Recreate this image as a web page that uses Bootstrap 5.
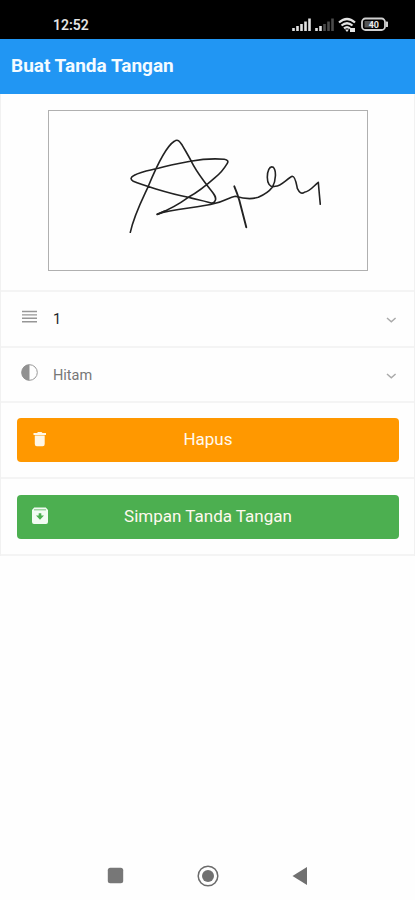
<!DOCTYPE html>
<html lang="id">
<head>
<meta charset="utf-8">
<meta name="viewport" content="width=device-width, initial-scale=1">
<title>Buat Tanda Tangan</title>
<link href="https://cdn.jsdelivr.net/npm/bootstrap@5.3.0/dist/css/bootstrap.min.css" rel="stylesheet">
<style>
body{font-family:Roboto,"Liberation Sans",sans-serif;height:900px;overflow:hidden;background:#fefefe}
svg{display:block;flex:none}
.statusbar{height:39px;background:#000;padding:11px 27px 0 53px}
.clock{font-size:14px;font-weight:600;line-height:28px;color:#e4e4e4}
.signals{margin-top:3px}
.appbar{height:55px;background:#2196f3;padding:0 11px}
.apptitle{font-size:19px;font-weight:700;line-height:54px;color:#f4fbff}
.panel{border:solid #f1f1f1;border-width:0 1px 0 1px}
.panel>*{border-bottom:2px solid #f4f4f4}
.padrow{height:198px;padding:16px 46px 0 47px}
.pad{height:161px;border:1.5px solid #b0b0b0}
.pickrow{padding:2px 17px 0 19px;color:#777}
.pick-a{height:56px}
.pick-b{height:55px}
.picktext{font-size:14.5px;line-height:20px;margin-left:15px}
.btnrow{height:76px;padding:15px 15px 0 16px}
.btnrow-last{height:77px;padding-top:16px}
.bigbtn{height:44px;border:0;border-radius:4px;font-size:17px;padding:0 15px 1px;color:#fff9ee}
.bigbtn .lead-icon{width:16px}
.bigbtn svg{margin-bottom:2px}
.bg-hapus{background:#ff9800}
.bg-simpan{background:#4caf50}
.navkeys{height:50px;padding:1px 107px 0 107px}
</style>
<script src="https://cdn.jsdelivr.net/npm/bootstrap@5.3.0/dist/js/bootstrap.bundle.min.js" defer></script>
</head>
<body class="d-flex flex-column m-0">
<header>
  <div class="statusbar d-flex justify-content-between">
    <span class="clock">12:52</span>
    <svg class="signals" width="97" height="20" viewBox="291 14 97 20">
      <g stroke="#e0e0e0" stroke-width="2.600">
        <path d="M293.500 31v-3M297.500 31v-5M301.500 31v-7M305.500 31v-9.500M309.500 31v-12.500"/>
        <path d="M316.500 31v-3M320.500 31v-5"/>
        <path stroke="#4a4a4a" d="M324.500 31v-7M328.500 31v-9.500M332.500 31v-12.500"/>
      </g>
      <g fill="none" stroke="#e4e4e4" stroke-width="2.200">
        <path d="M339 22.500q8-7 16 0M341.500 25.500q5.500-4.500 11 0M344 28.300q3-2.500 6 0"/>
      </g>
      <path fill="#e4e4e4" d="M345 29.500h4l-2 2.500zM350 28h5v4h-5z"/>
      <rect x="362" y="18.500" width="23" height="11.500" rx="3.500" fill="none" stroke="#d0d0d0" stroke-width="1.800"/>
      <path fill="#d0d0d0" d="M386 21.500h1a2 2.500 0 0 1 0 5.500h-1z"/>
      <rect x="364.500" y="21" width="8" height="6.500" fill="#555"/>
      <text x="373.800" y="27.500" text-anchor="middle" font-size="9" font-weight="700" fill="#e8e8e8">40</text>
    </svg>
  </div>
  <div class="appbar"><h1 class="apptitle m-0">Buat Tanda Tangan</h1></div>
</header>
<main class="panel flex-shrink-0">
  <div class="padrow">
    <div class="pad">
      <svg width="317" height="158" viewBox="48.700 110.700 317 158" fill="none" stroke="#222" stroke-width="1.600" stroke-linecap="round" stroke-linejoin="round">
        <path d="M130 232C134 214 142 199 148 186C155 169 166 146 174 141C178 138 180 142 182 145C186 152 189 157 191 161C196 171 201 177 206 184C211 191 217 196 215 200Q214 204 208 202C201 200 195 199 188 197C168 193 140 184 133 181Q128 178 134 175C141 171 150 170 158 168C168 165 179 163 190 161C201 159 214 158 224 159Q229 160 227 163C224 168 220 173 215 177C206 185 197 192 188 197C177 205 167 210 157 214C174 208 197 208 215 203C224 201 229 197 235 196C242 198 252 199 258 197C265 194 269 191 272 187C276 180 276 170 273 167C269 165 267 171 267 177C267 182 269 188 275 186C281 186 287 178 292 176C295 176 296 183 297 188C299 192 301 194 304 192C310 191 313 186 318 182Q319 194 320 204"/>
        <path stroke-width="1.900" d="M234 186Q237 193 239 200L246 227M157 214L164 211"/>
      </svg>
    </div>
  </div>
  <div class="pickrow pick-a d-flex align-items-center">
    <svg class="mb-2" width="18" height="14" viewBox="0 0 18 14"><path stroke="#969696" stroke-width="1.400" d="M2 2.500h15M2 5.900h15M2 9.300h15M2 12.700h15"/></svg>
    <span class="picktext text-dark">1</span>
    <svg class="ms-auto" width="12" height="8" viewBox="0 0 12 8"><path fill="none" stroke="#aaa" stroke-width="1.500" d="M2 2l4.300 3.800L10.600 2"/></svg>
  </div>
  <div class="pickrow pick-b d-flex align-items-center">
    <svg class="mb-2" width="18" height="18" viewBox="0 0 18 18"><circle cx="9.500" cy="9.500" r="7.800" fill="none" stroke="#999"/><path fill="#919191" d="M9.500 1.500a8 8 0 0 0 0 16z"/></svg>
    <span class="picktext">Hitam</span>
    <svg class="ms-auto" width="12" height="8" viewBox="0 0 12 8"><path fill="none" stroke="#aaa" stroke-width="1.500" d="M2 2l4.300 3.800L10.600 2"/></svg>
  </div>
  <div class="btnrow">
    <button type="button" class="bigbtn bg-hapus w-100 d-flex align-items-center">
      <svg class="lead-icon" height="16" viewBox="0 0 16 16"><path fill="#fff7e6" d="M1.500 2H5l1-1h3.500l1 1H14v2H1.500zM2.800 4.600h9.900V13q0 2.200-2 2.200H4.800q-2 0-2-2.200z"/></svg>
      <span class="flex-grow-1 text-center">Hapus</span><span class="lead-icon"></span>
    </button>
  </div>
  <div class="btnrow btnrow-last">
    <button type="button" class="bigbtn bg-simpan w-100 d-flex align-items-center">
      <svg class="lead-icon" height="18" viewBox="0 0 16 18"><path fill="#f2fbf2" fill-rule="evenodd" d="M2.200.5h11.600L16 3v12q0 2-2 2H2q-2 0-2-2V3zM2 2.500v.7h12v-.7zM6.700 6.300v2.200H4L8 12.800l4-4.300H9.300V6.300z"/></svg>
      <span class="flex-grow-1 text-center">Simpan Tanda Tangan</span><span class="lead-icon"></span>
    </button>
  </div>
</main>
<footer class="navkeys mt-auto d-flex align-items-center justify-content-between">
  <svg width="17" height="17" viewBox="0 0 17 17"><rect x=".8" y=".8" width="15.400" height="15.400" rx="2.500" fill="#777"/></svg>
  <svg width="22" height="22" viewBox="0 0 22 22"><circle cx="11" cy="11" r="9.800" fill="none" stroke="#6b6b6b" stroke-width="1.500"/><circle cx="11" cy="11" r="6" fill="#707070"/></svg>
  <svg width="17" height="18" viewBox="0 0 17 18"><path fill="#707070" d="M16 0v18L1.500 9z"/></svg>
</footer>
</body>
</html>
